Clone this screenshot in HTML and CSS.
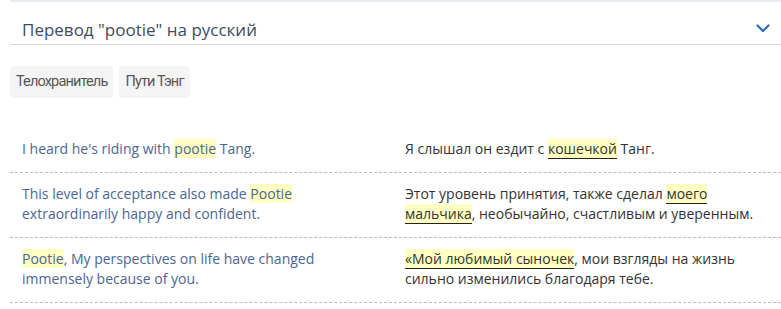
FILE: index.html
```html
<!DOCTYPE html>
<html lang="ru">
<head>
    <meta charset="UTF-8">
    <title>Перевод pootie</title>
    <link rel="stylesheet" href="styles.css">
</head>
<body>

    <div class="topbar"></div>

    <div class="card">
        <div class="card-header">
            <h2>Перевод "pootie" на русский</h2>
            <svg class="chevron" width="14" height="9" viewBox="0 0 14 9">
                <path d="M1.5 1.5 L7 7 L12.5 1.5" fill="none" stroke="#2d6bb4" stroke-width="2.2" stroke-linecap="round" stroke-linejoin="round"/>
            </svg>
        </div>

        <div class="tags">
            <span class="tag">Телохранитель</span>
            <span class="tag">Пути Тэнг</span>
        </div>

        <div class="examples">
            <div class="row">
                <div class="src">I heard he's riding with <mark>pootie</mark> Tang.</div>
                <div class="dst">Я слышал он ездит с <mark class="u">кошечкой</mark> Танг.</div>
            </div>
            <div class="row">
                <div class="src">This level of acceptance also made <mark>Pootie</mark> extraordinarily happy and confident.</div>
                <div class="dst">Этот уровень принятия, также сделал <mark class="u">моего мальчика</mark>, необычайно, счастливым и уверенным.</div>
            </div>
            <div class="row">
                <div class="src"><mark>Pootie</mark>, My perspectives on life have changed immensely because of you.</div>
                <div class="dst"><mark class="u">«Мой любимый сыночек</mark>, мои взгляды на жизнь сильно изменились благодаря тебе.</div>
            </div>
        </div>
    </div>

</body>
</html>
```

FILE: styles.css
```css
body {
    margin: 0;
    background: #fff;
    font-family: "Open Sans", sans-serif;
}
.topbar {
    margin-left: 10px;
    height: 2px;
    background: #e6ebf1;
}
.card {
    margin-left: 10px;
}
.card-header {
    display: flex;
    align-items: center;
    justify-content: space-between;
    height: 42px;
    padding: 0 11px 0 12px;
    border-bottom: 1px solid #d3d8dc;
}
.card-header h2 {
    margin: 0;
    padding-top: 12px;
    font-size: 17px;
    font-weight: normal;
    color: #3d4c60;
}
.chevron {
    margin-top: 10px;
}
.tags {
    display: flex;
    gap: 6px;
    margin-top: 21px;
}
.tag {
    background: #f5f5f5;
    color: #555;
    font-family: Roboto, sans-serif;
    font-size: 14.5px;
    letter-spacing: -0.85px;
    line-height: 32px;
    padding: 0 6px;
    border-radius: 2px;
}
.examples {
    margin-top: 30px;
}
.row {
    display: grid;
    grid-template-columns: 383px 1fr;
    padding: 11px 0 13px;
    border-bottom: 1px dashed #bdbdbd;
    font-size: 14px;
    line-height: 20px;
}
.src {
    padding: 0 40px 0 12px;
    color: #4b6594;
}
.dst {
    padding: 0 24px 0 12px;
    color: #333;
}
mark {
    background: #ffffc2;
    color: inherit;
}
mark.u {
    border-bottom: 1px solid #222;
}
```
